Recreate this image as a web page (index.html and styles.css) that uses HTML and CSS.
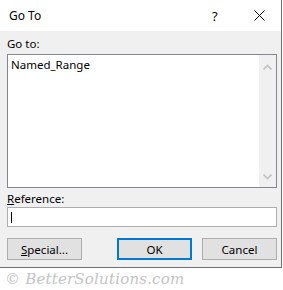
FILE: index.html
```html
<!DOCTYPE html>
<html>
<head>
  <title>Go To</title>
  <link rel="stylesheet" href="styles.css">
</head>
<body>
  <div class="dialog">
    <div class="titlebar">
      <span class="title">Go To</span>
      <span class="help">?</span>
      <span class="close">
        <svg width="11" height="11" viewBox="0 0 11 11"><path d="M0.5 0.5 L10.5 10.5 M10.5 0.5 L0.5 10.5" stroke="#000" stroke-width="1" fill="none"/></svg>
      </span>
    </div>
    <div class="content">
      <div class="label label-goto">Go to:</div>
      <div class="listbox">
        <div class="list-items">
          <div class="list-item">Named_Range</div>
        </div>
        <div class="scrollbar">
          <svg width="9" height="6" viewBox="0 0 9 6"><path d="M0.5 5.5 L4.5 1.5 L8.5 5.5" stroke="#c2c2c2" stroke-width="1.6" fill="none"/></svg>
          <svg width="9" height="6" viewBox="0 0 9 6"><path d="M0.5 0.5 L4.5 4.5 L8.5 0.5" stroke="#c2c2c2" stroke-width="1.6" fill="none"/></svg>
        </div>
      </div>
      <div class="label label-ref"><u>R</u>eference:</div>
      <div class="textbox"><span class="caret"></span></div>
      <div class="buttons">
        <button class="btn"><u>S</u>pecial...</button>
        <span class="spacer"></span>
        <button class="btn btn-default">OK</button>
        <button class="btn">Cancel</button>
      </div>
    </div>
  </div>
  <div class="watermark">&copy; BetterSolutions.com</div>
</body>
</html>
```

FILE: styles.css
```css
body {
  margin: 0;
  background-color: #fff;
  font-family: "Noto Sans", sans-serif;
  font-size: 11.5px;
  color: #000;
}

.dialog {
  width: 281px;
  background-color: #f0f0f0;
  border-right: 1px solid #6f6f6f;
  border-bottom: 1px solid #6f6f6f;
}

.titlebar {
  height: 31px;
  background-color: #fff;
  display: flex;
  align-items: center;
}

.title {
  padding-left: 9px;
  flex: 1;
  font-size: 12px;
  line-height: 16px;
}

.help {
  width: 42px;
  font-size: 13px;
}

.close {
  width: 27px;
  display: flex;
}

.content {
  padding: 5px 4px 7px 7px;
}

.label {
  line-height: 16px;
}

.label-goto {
  margin-bottom: 2px;
}

.listbox {
  height: 132px;
  border: 1px solid #828790;
  background-color: #fff;
  display: flex;
}

.list-items {
  flex: 1;
  padding: 2px 3px;
}

.list-item {
  line-height: 15px;
}

.scrollbar {
  width: 17px;
  background-color: #f0f0f0;
  display: flex;
  flex-direction: column;
  justify-content: space-between;
  align-items: center;
  padding: 9px 0 7px;
}

.label-ref {
  margin-top: 3px;
}

.textbox {
  height: 18px;
  border: 1px solid #adadad;
  background-color: #fff;
  display: flex;
  align-items: center;
  padding-left: 3px;
}

.caret {
  width: 1px;
  height: 11px;
  background-color: #000;
}

.buttons {
  display: flex;
  gap: 10px;
  margin-top: 11px;
}

.spacer {
  flex: 1;
}

.btn {
  width: 75px;
  height: 22px;
  margin: 0;
  padding: 0;
  font-family: "Noto Sans", sans-serif;
  font-size: 11.5px;
  color: #000;
  background-color: #e1e1e1;
  border: 1px solid #adadad;
}

.btn-default {
  border: 2px solid #0078d7;
}

.watermark {
  padding: 2px 0 0 5px;
  font-family: "DejaVu Serif", serif;
  font-style: italic;
  font-size: 15px;
  letter-spacing: 0.2px;
  color: #c4c4c4;
}
```
